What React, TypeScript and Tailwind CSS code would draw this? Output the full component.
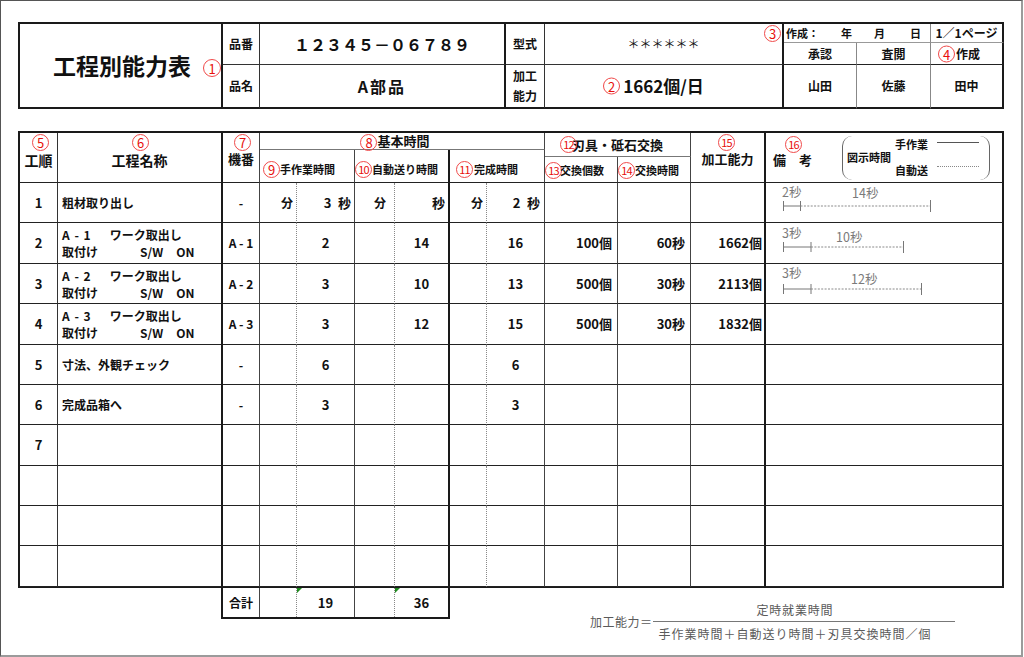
import React from 'react';

const Circ = ({ n, className = '' }: { n: string; className?: string }) => (
  <span
    className={`inline-flex h-[17px] w-[17px] shrink-0 items-center justify-center rounded-full border-[1.5px] border-[#f04a4a] font-normal leading-none text-[#e8100c] ${
      n.length > 1 ? 'text-[11px] tracking-[-0.8px]' : 'text-[13px]'
    } ${className}`}
  >
    {n}
  </span>
);

const TOP =
  'grid w-[986px] grid-cols-[203px_37px_246px_39px_239px_73px_74px_73px] grid-rows-[19px_22px_44px] border-l-2 border-t-2 border-[#1a1a1a]';

const MCOLS = 'grid-cols-[38px_165px_37px_37px_58px_40px_55px_37px_58px_73px_73px_75px_238px]';

const RB = [
  'border-r border-r-[#333]',
  'border-r-2 border-r-[#1a1a1a]',
  'border-r border-r-[#444]',
  'border-r border-r-[#888] [border-right-style:dotted]',
  'border-r border-r-[#444]',
  'border-r border-r-[#888] [border-right-style:dotted]',
  'border-r-2 border-r-[#1a1a1a]',
  'border-r border-r-[#888] [border-right-style:dotted]',
  'border-r border-r-[#444]',
  'border-r border-r-[#444]',
  'border-r border-r-[#444]',
  'border-r-2 border-r-[#1a1a1a]',
  'border-r-2 border-r-[#1a1a1a]',
];
const BB = 'border-b border-b-[#222]';

function TopTable() {
  const c = 'flex items-center justify-center font-bold';
  return (
    <div className={TOP}>
      <div className={`relative col-start-1 row-start-1 row-span-3 ${c} border-r-2 border-b-2 border-r-[#1a1a1a] border-b-[#1a1a1a] text-[23px]`}>
        <span className="ml-[3px]">工程別能力表</span>
        <Circ n="1" className="absolute right-[0px] top-[35px] h-[18px] w-[18px]" />
      </div>
      <div className={`col-start-2 row-start-1 row-span-2 ${c} border-r border-b border-r-[#333] border-b-[#333] text-[12px]`}>品番</div>
      <div className={`col-start-3 row-start-1 row-span-2 ${c} border-r-2 border-b border-r-[#1a1a1a] border-b-[#333] text-[16px]`}>
        １２３４５－０６７８９
      </div>
      <div className={`col-start-4 row-start-1 row-span-2 ${c} border-r border-b border-r-[#333] border-b-[#333] text-[12px]`}>型式</div>
      <div className={`relative col-start-5 row-start-1 row-span-2 ${c} border-r-2 border-b border-r-[#1a1a1a] border-b-[#333] text-[12px] font-normal`}>
        ＊＊＊＊＊＊
        <Circ n="3" className="absolute right-[1px] top-[1px]" />
      </div>
      <div className="col-start-6 col-span-2 row-start-1 flex items-center border-r border-b border-r-[#888] border-b-[#999] pl-[2px] text-[11px] font-bold">
        <span>作成：</span>
        <span className="ml-[22px]">年</span>
        <span className="ml-[22px]">月</span>
        <span className="ml-[25px]">日</span>
      </div>
      <div className={`col-start-8 row-start-1 ${c} border-r-2 border-b border-r-[#1a1a1a] border-b-[#999] text-[12px]`}>1／1ページ</div>
      <div className={`col-start-6 row-start-2 ${c} border-r border-b border-r-[#888] border-b-[#222] text-[12px]`}>承認</div>
      <div className={`col-start-7 row-start-2 ${c} border-r border-b border-r-[#888] border-b-[#222] text-[12px]`}>査閲</div>
      <div className={`col-start-8 row-start-2 ${c} border-r-2 border-b border-r-[#1a1a1a] border-b-[#222] text-[12px]`}>
        <span className="relative ml-[3px]">
          作成
          <Circ n="4" className="absolute -left-[18px] top-1/2 -translate-y-1/2" />
        </span>
      </div>
      <div className={`col-start-2 row-start-3 ${c} border-r border-b-2 border-r-[#333] border-b-[#1a1a1a] text-[12px]`}>品名</div>
      <div className={`col-start-3 row-start-3 ${c} border-r-2 border-b-2 border-r-[#1a1a1a] border-b-[#1a1a1a] text-[16px] tracking-[2px]`}>A部品</div>
      <div className={`col-start-4 row-start-3 flex flex-col items-center justify-center font-bold border-r border-b-2 border-r-[#333] border-b-[#1a1a1a] text-[12px] leading-[20px]`}>
        <span>加工</span>
        <span>能力</span>
      </div>
      <div className={`col-start-5 row-start-3 ${c} border-r-2 border-b-2 border-r-[#1a1a1a] border-b-[#1a1a1a] text-[17px]`}>
        <span className="relative">
          1662個/日
          <Circ n="2" className="absolute -left-[20px] top-1/2 -translate-y-1/2" />
        </span>
      </div>
      <div className={`col-start-6 row-start-3 ${c} border-r border-b-2 border-r-[#888] border-b-[#1a1a1a] text-[12px]`}>山田</div>
      <div className={`col-start-7 row-start-3 ${c} border-r border-b-2 border-r-[#888] border-b-[#1a1a1a] text-[12px]`}>佐藤</div>
      <div className={`col-start-8 row-start-3 ${c} border-r-2 border-b-2 border-r-[#1a1a1a] border-b-[#1a1a1a] text-[12px]`}>田中</div>
    </div>
  );
}

function MainHeader() {
  return (
    <div className={`grid w-[986px] ${MCOLS} grid-rows-[17px_7px_26px] border-l-2 border-t-2 border-[#1a1a1a] font-bold`}>
      <div className={`relative col-start-1 row-start-1 row-span-3 flex items-center justify-center ${RB[0]} ${BB} pt-[4px] text-[14px] leading-[14px]`}>
        工順
        <Circ n="5" className="absolute left-[12px] top-[1px]" />
      </div>
      <div className={`relative col-start-2 row-start-1 row-span-3 flex items-center justify-center ${RB[1]} ${BB} pt-[4px] text-[14px] leading-[14px]`}>
        工程名称
        <Circ n="6" className="absolute left-[74px] top-[1px]" />
      </div>
      <div className={`relative col-start-3 row-start-1 row-span-3 flex items-center justify-center ${RB[2]} ${BB} pt-[2px] text-[13px] leading-[13px]`}>
        <span>機番</span>
        <Circ n="7" className="absolute left-[11px] top-[1px]" />
      </div>
      <div className={`col-start-4 col-span-6 row-start-1 flex items-center justify-center ${RB[8]} border-b border-b-[#777] pr-[14px] text-[13px]`}>
        <Circ n="8" className="mt-[2px]" />
        <span>基本時間</span>
      </div>
      <div className={`col-start-4 col-span-2 row-start-2 row-span-2 flex items-center ${RB[4]} ${BB} pl-[3px] pt-[7px] text-[11px]`}>
        <Circ n="9" />
        <span>手作業時間</span>
      </div>
      <div className={`col-start-6 col-span-2 row-start-2 row-span-2 flex items-center ${RB[6]} ${BB} pl-0 pt-[7px] text-[11px]`}>
        <Circ n="10" />
        <span>自動送り時間</span>
      </div>
      <div className={`col-start-8 col-span-2 row-start-2 row-span-2 flex items-center ${RB[8]} ${BB} pl-[6px] pt-[7px] text-[11px]`}>
        <Circ n="11" />
        <span className="ml-[1px]">完成時間</span>
      </div>
      <div className={`col-start-10 col-span-2 row-start-1 row-span-2 flex items-center ${RB[10]} border-b border-b-[#777] pl-[15px] text-[13px]`}>
        <Circ n="12" className="relative z-10" />
        <span className="-ml-[5px]">刃具・砥石交換</span>
      </div>
      <div className={`col-start-10 row-start-3 flex items-center ${RB[9]} ${BB} pt-[2px] text-[11px]`}>
        <Circ n="13" />
        <span className="-ml-[2px]">交換個数</span>
      </div>
      <div className={`col-start-11 row-start-3 flex items-center ${RB[10]} ${BB} pt-[2px] text-[11px]`}>
        <Circ n="14" />
        <span>交換時間</span>
      </div>
      <div className={`relative col-start-12 row-start-1 row-span-3 flex items-center justify-center ${RB[11]} ${BB} pt-[2px] text-[13px] leading-[13px]`}>
        加工能力
        <Circ n="15" className="absolute left-[27px] top-[1px]" />
      </div>
      <div className={`relative col-start-13 row-start-1 row-span-3 flex items-center ${RB[12]} ${BB} pl-[7px] text-[13px]`}>
        <span className="pt-[4px] leading-[13px]">備　考</span>
        <Circ n="16" className="absolute left-[19px] top-[3px]" />
        <div className="ml-[30px] flex h-[44px] w-[148px] items-center rounded-[10px] border-x border-x-[#666] pl-[4px] text-[11px]">
          <span>図示時間</span>
          <div className="ml-[4px] flex flex-col gap-[10px]">
            <div className="flex h-[16px] items-center">
              <span>手作業</span>
              <span className="ml-[9px] mt-[-4px] w-[42px] border-t border-t-[#555]" />
            </div>
            <div className="flex h-[16px] items-center">
              <span>自動送</span>
              <span className="ml-[9px] mt-[-8px] w-[42px] border-t border-dotted border-t-[#888]" />
            </div>
          </div>
        </div>
      </div>
    </div>
  );
}

type Ch = { l1: string; l1y: number; l2: string; l2x: number; l2y: number; y: number; x1: number; x2: number };
const CHARTS: Record<number, Ch> = {
  1: { l1: '2秒', l1y: 14, l2: '14秒', l2x: 86, l2y: 15, y: 23, x1: 34.5, x2: 164.5 },
  2: { l1: '3秒', l1y: 15, l2: '10秒', l2x: 70, l2y: 19, y: 24, x1: 45, x2: 137.5 },
  3: { l1: '3秒', l1y: 14, l2: '12秒', l2x: 85, l2y: 20, y: 25, x1: 45, x2: 155.5 },
};

function Chart({ id }: { id: number }) {
  const c = CHARTS[id];
  const x0 = 17.5;
  return (
    <svg width="236" height="39" className="block font-normal">
      <text x="16" y={c.l1y} fontSize="12.5" fontWeight="400" fill="#7a7a7a">{c.l1}</text>
      <text x={c.l2x} y={c.l2y} fontSize="12.5" fontWeight="400" fill="#7a7a7a">{c.l2}</text>
      <line x1={x0} y1={c.y - 5} x2={x0} y2={c.y + 5} stroke="#777" strokeWidth="1" />
      <line x1={x0} y1={c.y} x2={c.x1} y2={c.y} stroke="#777" strokeWidth="1" />
      <line x1={c.x1} y1={c.y - 5} x2={c.x1} y2={c.y + 5} stroke="#777" strokeWidth="1" />
      <line x1={c.x1} y1={c.y} x2={c.x2} y2={c.y} stroke="#8a8a8a" strokeWidth="1" strokeDasharray="2 1.4" />
      <line x1={c.x2} y1={c.y - 6} x2={c.x2} y2={c.y + 6} stroke="#777" strokeWidth="1" />
    </svg>
  );
}

type Row = {
  no: string;
  name: React.ReactNode;
  two?: boolean;
  mach: string;
  h: [string, string, string, string, string, string];
  cnt?: string;
  ct?: string;
  cap?: string;
  chart?: number;
  first?: boolean;
};

const twoLine = (n: string) => (
  <>
    <div className="flex">
      <span className="tracking-[1px]">A - {n}</span>
      <span className="ml-[18px]">ワーク取出し</span>
    </div>
    <div className="flex">
      <span>取付け</span>
      <span className="ml-[42px]">S/W</span>
      <span className="ml-[13px]">ON</span>
    </div>
  </>
);

const E: [string, string, string, string, string, string] = ['', '', '', '', '', ''];
const ROWS: Row[] = [
  { no: '1', name: '粗材取り出し', mach: '-', h: ['分', '3\u2002秒', '分', '秒', '分', '2\u2002秒'], chart: 1, first: true },
  { no: '2', name: twoLine('1'), two: true, mach: 'A - 1', h: ['', '2', '', '14', '', '16'], cnt: '100個', ct: '60秒', cap: '1662個', chart: 2 },
  { no: '3', name: twoLine('2'), two: true, mach: 'A - 2', h: ['', '3', '', '10', '', '13'], cnt: '500個', ct: '30秒', cap: '2113個', chart: 3 },
  { no: '4', name: twoLine('3'), two: true, mach: 'A - 3', h: ['', '3', '', '12', '', '15'], cnt: '500個', ct: '30秒', cap: '1832個' },
  { no: '5', name: '寸法、外観チェック', mach: '-', h: ['', '6', '', '', '', '6'] },
  { no: '6', name: '完成品箱へ', mach: '-', h: ['', '3', '', '', '', '3'] },
  { no: '7', name: '', mach: '', h: E },
  { no: '', name: '', mach: '', h: E },
  { no: '', name: '', mach: '', h: E },
  { no: '', name: '', mach: '', h: E },
];

function MainBody() {
  const cells: React.ReactNode[] = [];
  ROWS.forEach((r, ri) => {
    const base = (i: number) => `${RB[i]} ${BB} flex items-center overflow-hidden`;
    const k = (i: number) => `${ri}-${i}`;
    cells.push(<div key={k(0)} className={`${base(0)} justify-center text-[13px]`}>{r.no}</div>);
    cells.push(
      r.two ? (
        <div key={k(1)} className={`${RB[1]} ${BB} flex flex-col justify-center overflow-hidden pl-[4px] text-[12px] leading-[17px]`}>{r.name}</div>
      ) : (
        <div key={k(1)} className={`${base(1)} pl-[4px] text-[12px]`}>{r.name}</div>
      )
    );
    cells.push(<div key={k(2)} className={`${base(2)} justify-center text-[12px]`}>{r.mach}</div>);
    cells.push(<div key={k(3)} className={`${base(3)} justify-end pr-[3px] text-[12px]`}>{r.h[0]}</div>);
    cells.push(
      <div key={k(4)} className={`${base(4)} text-[13px] ${r.first ? 'justify-end pr-[3px]' : 'justify-center'}`}>{r.h[1]}</div>
    );
    cells.push(<div key={k(5)} className={`${base(5)} justify-end pr-[8px] text-[12px]`}>{r.h[2]}</div>);
    cells.push(
      <div key={k(6)} className={`${base(6)} text-[13px] ${r.first ? 'justify-end pr-[3px]' : 'justify-center'}`}>{r.h[3]}</div>
    );
    cells.push(<div key={k(7)} className={`${base(7)} justify-end pr-[3px] text-[12px]`}>{r.h[4]}</div>);
    cells.push(
      <div key={k(8)} className={`${base(8)} text-[13px] ${r.first ? 'justify-end pr-[4px]' : 'justify-center'}`}>{r.h[5]}</div>
    );
    cells.push(<div key={k(9)} className={`${base(9)} justify-end pr-[5px] text-[13px]`}>{r.cnt}</div>);
    cells.push(<div key={k(10)} className={`${base(10)} justify-end pr-[5px] text-[13px]`}>{r.ct}</div>);
    cells.push(<div key={k(11)} className={`${base(11)} justify-end pr-[2px] text-[13px]`}>{r.cap}</div>);
    cells.push(
      <div key={k(12)} className={`${RB[12]} ${BB} overflow-hidden font-normal`}>{r.chart ? <Chart id={r.chart} /> : null}</div>
    );
  });
  return (
    <div
      className={`grid w-[986px] ${MCOLS} grid-rows-[40px_41px_40px_41px_40px_40px_41px_40px_40px_41px] border-l-2 border-b border-[#1a1a1a] font-bold`}
    >
      {cells}
    </div>
  );
}

function Footer() {
  const tri = (
    <span className="absolute left-0 top-0 h-0 w-0 border-t-[5px] border-r-[5px] border-t-[#1f8a1f] border-r-transparent" />
  );
  return (
    <div className="flex items-start">
      <div className="ml-[203px] grid h-[31px] grid-cols-[37px_37px_58px_40px_53px] border-l-2 border-r-2 border-b-2 border-[#1a1a1a] font-bold">
        <div className="flex items-center justify-center border-r border-r-[#444] text-[12px]">合計</div>
        <div className="border-r border-r-[#888] [border-right-style:dotted]" />
        <div className="relative flex items-center justify-center border-r border-r-[#444] text-[13px]">
          {tri}19
        </div>
        <div className="border-r border-r-[#888] [border-right-style:dotted]" />
        <div className="relative flex items-center justify-center text-[13px]">
          {tri}36
        </div>
      </div>
      <div className="ml-[140px] mt-[14px] flex items-center text-[12px] text-[#5a5a5a]">
        <span className="tracking-[0.5px]">加工能力＝</span>
        <div className="flex w-[302px] flex-col">
          <span className="ml-[104px] leading-[16px] tracking-[0.8px]">定時就業時間</span>
          <span className="mt-[3px] h-px w-full bg-[#777]" />
          <span className="ml-[6px] mt-[4px] leading-[16px] tracking-[1px]">手作業時間＋自動送り時間＋刃具交換時間／個</span>
        </div>
      </div>
    </div>
  );
}

export default function App() {
  return (
    <div className="h-[657px] w-[1024px] overflow-hidden bg-white font-['Noto_Sans_CJK_JP','Noto_Sans',sans-serif] text-[#111]">
      <div className="flex h-[657px] w-[1023px] flex-col border-l border-t border-r-2 border-b-2 border-l-[#555] border-t-[#555] border-r-[#9b9b9b] border-b-[#9b9b9b] pl-[17px] pt-[21px]">
        <TopTable />
        <div className="mt-[22px]">
          <MainHeader />
          <MainBody />
        </div>
        <Footer />
      </div>
    </div>
  );
}
